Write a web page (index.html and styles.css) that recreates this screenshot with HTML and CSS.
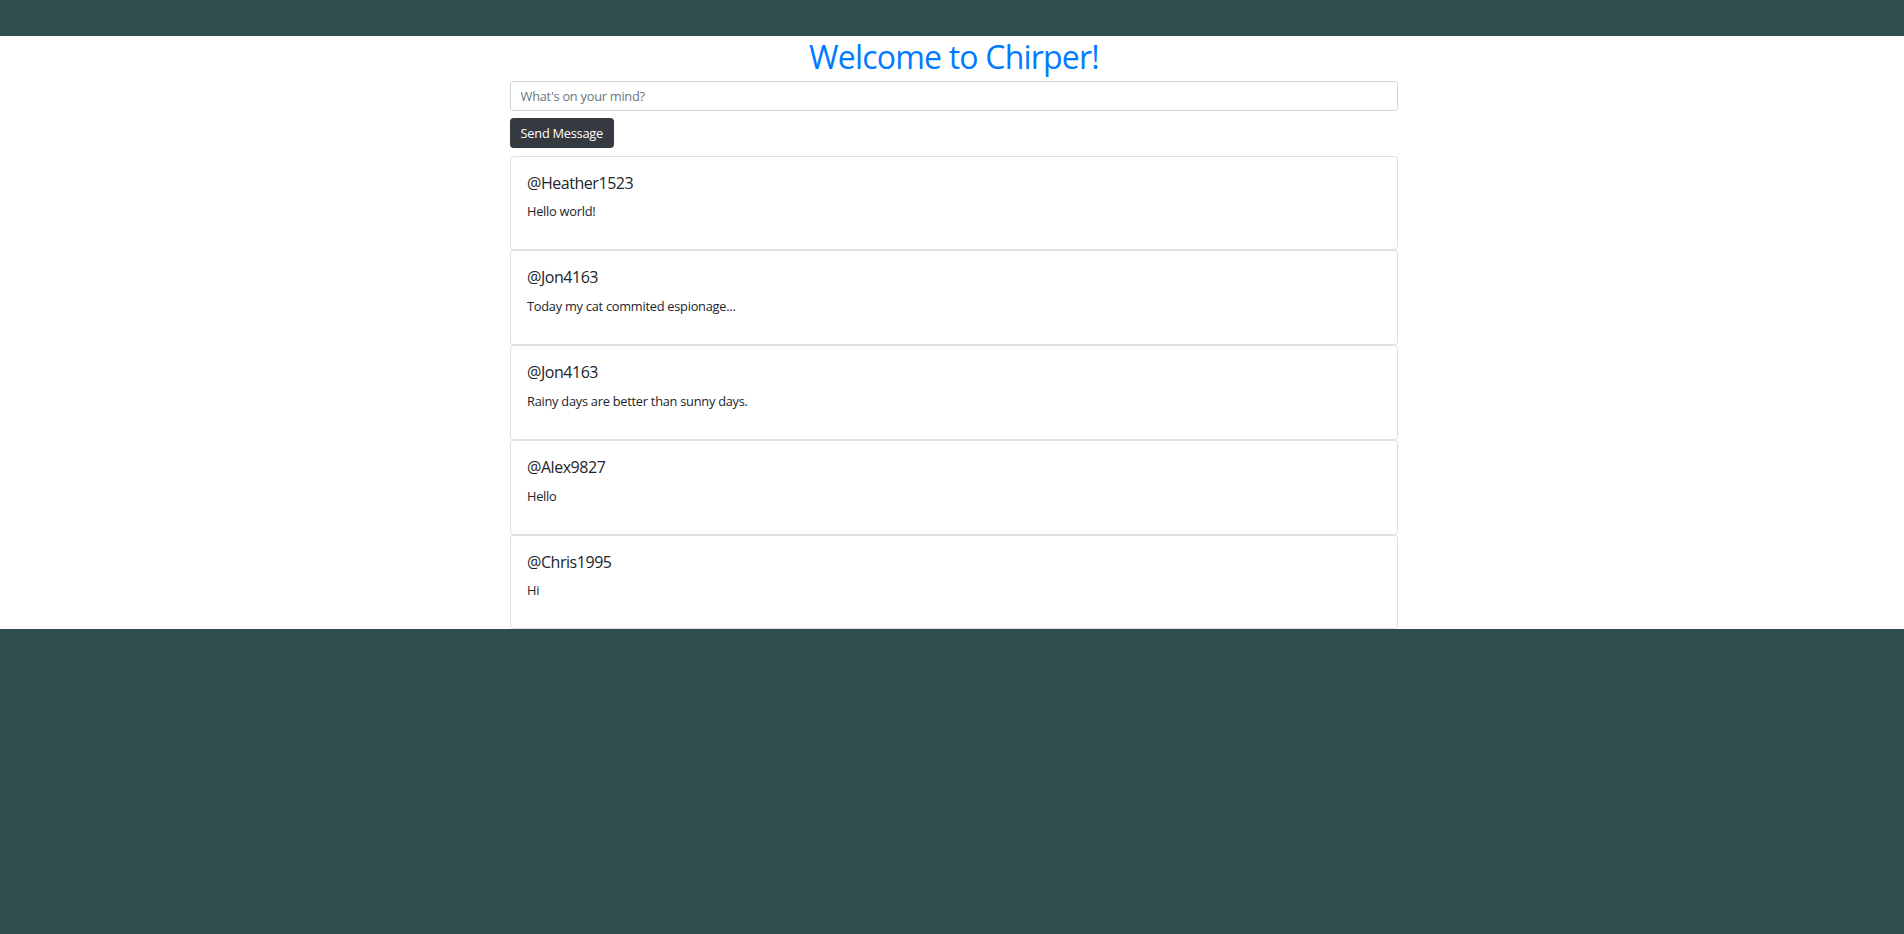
FILE: index.html
```html
<!DOCTYPE html>
<html lang="en">
<head>
<meta charset="utf-8">
<title>Chirper</title>
<link rel="stylesheet" href="styles.css">
</head>
<body>
<div class="topbar"></div>
<main class="page">
  <div class="container">
    <h1 class="title">Welcome to Chirper!</h1>
    <input class="form-control" type="text" placeholder="What's on your mind?">
    <button class="btn-dark" type="button">Send Message</button>
    <div class="feed">
      <div class="card"><h5 class="card-title">@Heather1523</h5><p class="card-text">Hello world!</p></div>
      <div class="card"><h5 class="card-title">@Jon4163</h5><p class="card-text">Today my cat commited espionage...</p></div>
      <div class="card"><h5 class="card-title">@Jon4163</h5><p class="card-text">Rainy days are better than sunny days.</p></div>
      <div class="card"><h5 class="card-title">@Alex9827</h5><p class="card-text">Hello</p></div>
      <div class="card"><h5 class="card-title">@Chris1995</h5><p class="card-text">Hi</p></div>
    </div>
  </div>
</main>
</body>
</html>
```
FILE: styles.css
```css
html {
  background: #2f4f4f;
}
body {
  margin: 0;
  font-family: "Open Sans", "Noto Sans", sans-serif;
  font-size: 12.8px;
  line-height: 1.5;
  color: #212529;
}
.topbar {
  height: 36px;
  background: #2f4f4f;
}
.page {
  background: #fff;
  padding-left: 4px;
}
.container {
  width: 888px;
  margin: 0 auto;
  display: flex;
  flex-direction: column;
  align-items: flex-start;
}
.title {
  align-self: stretch;
  text-align: center;
  margin: 0 0 4px;
  padding-top: 2.4px;
  font-size: 32px;
  font-weight: 400;
  line-height: 1.2;
  letter-spacing: -0.8px;
  color: #007bff;
}
.form-control {
  box-sizing: border-box;
  width: 100%;
  height: 30.4px;
  padding: 0 9.6px;
  font-family: inherit;
  font-size: 12.8px;
  letter-spacing: -0.25px;
  color: #495057;
  border: 1px solid #ced4da;
  border-radius: 3.2px;
  background: #fff;
  outline: none;
}
.form-control::placeholder {
  color: #6c757d;
}
.btn-dark {
  margin-top: 6.4px;
  height: 30.4px;
  padding: 0 9.6px;
  font-family: inherit;
  font-size: 12.8px;
  letter-spacing: -0.25px;
  color: #fff;
  background: #343a40;
  border: 1px solid #343a40;
  border-radius: 3.2px;
}
.feed {
  align-self: stretch;
  margin-top: 7.6px;
  display: flex;
  flex-direction: column;
}
.card {
  border: 1px solid rgba(0, 0, 0, 0.125);
  border-radius: 3.2px;
  padding: 17px 16px 15px;
}
.card-title {
  margin: 0 0 9.6px;
  font-size: 16px;
  font-weight: 400;
  line-height: 1.2;
  letter-spacing: -0.45px;
}
.card-text {
  margin: 0 0 12.8px;
  letter-spacing: -0.25px;
}
```
